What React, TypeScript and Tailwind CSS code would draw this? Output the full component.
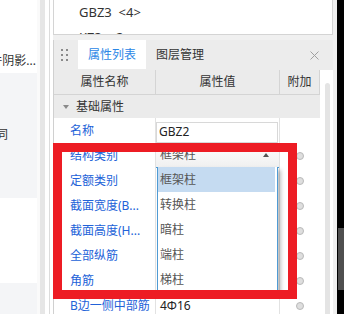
import React from "react";

const Circle = () => (
  <div className="w-[8px] h-[8px] rounded-full bg-[#dedede] border border-[#b9b9b9]" />
);

type Row = { label: string; value?: React.ReactNode; circle: boolean };

export default function App() {
  const rows: Row[] = [
    { label: "名称", circle: false },
    { label: "结构类别", circle: true },
    { label: "定额类别", circle: true },
    { label: "截面宽度(B...", circle: true },
    { label: "截面高度(H...", circle: true },
    { label: "全部纵筋", circle: true },
    { label: "角筋", circle: true },
    { label: "B边一侧中部筋", value: "4Φ16", circle: true },
  ];

  return (
    <div className="relative w-[344px] h-[314px] flex overflow-hidden bg-white text-[12px] text-[#333] font-['Noto_Sans','Noto_Sans_CJK_SC',sans-serif]">
      {/* left panel */}
      <div className="w-[37px] flex flex-col shrink-0">
        <div className="h-[73px] shrink-0 bg-white pt-[53px] flex justify-end overflow-hidden">
          <span className="whitespace-nowrap leading-4 pr-[1px]">构件阴影...</span>
        </div>
        <div className="h-[125px] shrink-0 bg-[#f4f5f7] pt-[54px] overflow-hidden">
          <span className="block leading-4 -ml-[4px]">同</span>
        </div>
        <div className="h-[85px] shrink-0 bg-white" />
        <div className="flex-1 bg-[#f4f5f7]" />
      </div>
      <div className="w-[3px] bg-[#fafafa] shrink-0" />
      <div className="w-[5px] bg-[#e6e6e6] shrink-0" />
      <div className="w-[4px] bg-white shrink-0" />
      <div className="w-[1px] bg-[#dcdcdc] shrink-0" />
      <div className="w-[3px] bg-white shrink-0" />

      {/* main */}
      <div className="w-[280px] shrink-0 flex flex-col h-[314px] overflow-hidden">
        {/* list panel */}
        <div className="h-[35px] shrink-0 border-l border-r border-b border-[#d4d4d4] bg-white overflow-hidden">
          <div className="h-[25px] flex items-center pl-[25px] text-[13px] leading-none whitespace-nowrap">
            GBZ3&nbsp;&nbsp;&lt;4&gt;
          </div>
          <div className="h-[25px] flex items-center pl-[25px] text-[13px] leading-none whitespace-nowrap">
            KZ3&nbsp;&nbsp;&lt;2&gt;
          </div>
        </div>
        <div className="h-[5px] shrink-0 bg-[#f0f0f0]" />

        {/* property panel */}
        <div className="flex-1 min-h-0 flex flex-col border-l border-[#d0d0d0] overflow-hidden">
          <div className="h-[30px] shrink-0 bg-[#ececec] flex items-stretch">
            <div className="w-[24px] flex items-center pl-[7px]">
              <div className="grid grid-cols-2 gap-x-[3px] gap-y-[3px]">
                {[0, 1, 2, 3, 4, 5].map((i) => (
                  <div key={i} className="w-[2px] h-[2px] bg-[#8a8a8a]" />
                ))}
              </div>
            </div>
            <div className="w-[68px] bg-white flex items-center justify-center text-[#2b87e6] mb-[1px]">
              属性列表
            </div>
            <div className="w-[68px] flex items-center pl-[10px]">图层管理</div>
            <div className="flex-1" />
            <div className="w-[24px] flex items-center justify-start pl-[1px]">
              <svg width="9" height="9" viewBox="0 0 9 9">
                <path d="M0.5 0.5L8.5 8.5M8.5 0.5L0.5 8.5" stroke="#a0a0a0" strokeWidth="1" />
              </svg>
            </div>
          </div>

          <div className="flex-1 min-h-0 flex overflow-hidden">
            {/* table */}
            <div className="w-[266px] flex flex-col">
              <div className="h-[25px] shrink-0 bg-[#ebebeb] border-b border-[#d4d4d4] flex">
                <div className="w-[102px] border-r border-[#d4d4d4] flex items-center justify-center">属性名称</div>
                <div className="w-[124px] border-r border-[#d4d4d4] flex items-center justify-center">属性值</div>
                <div className="w-[40px] border-r border-[#d4d4d4] flex items-center justify-center">附加</div>
              </div>
              <div className="h-[23px] shrink-0 bg-[#ebebeb] flex items-center">
                <svg width="6" height="4" viewBox="0 0 6 4" className="ml-[9px] mr-[7px]">
                  <path d="M0 0H6L3 4Z" fill="#8a8a8a" />
                </svg>
                <span>基础属性</span>
              </div>
              {rows.map((r, i) => (
                <div key={i} className="h-[25px] flex shrink-0">
                  <div className="w-[102px] border-r border-[#e2e2e2] flex items-center pl-[16px] text-[#2262d8] whitespace-nowrap overflow-hidden">
                    {r.label}
                  </div>
                  <div className="w-[124px] border-r border-[#e2e2e2] flex items-center">
                    {i === 0 && (
                      <div className="mt-[3px] w-[122px] h-[21px] border border-[#d8d8d8] flex items-center pl-[2px] text-[#222]">
                        GBZ2
                      </div>
                    )}
                    {i === 1 && (
                      <div className="w-full h-full flex items-center justify-between pl-[4px] pr-[10px] bg-gradient-to-b from-white to-[#f0f0f0] border-b border-[#4f9bd4] text-[#555]">
                        <span>框架柱</span>
                        <svg width="6" height="4" viewBox="0 0 6 4">
                          <path d="M0 4H6L3 0Z" fill="#555" />
                        </svg>
                      </div>
                    )}
                    {i > 1 && r.value && <span className="pl-[4px] text-[#222]">{r.value}</span>}
                  </div>
                  <div className="w-[40px] flex items-center justify-center">{r.circle && <Circle />}</div>
                </div>
              ))}
            </div>
            {/* gutter with scrollbar */}
            <div className="w-[13px] bg-white pt-[13px] pl-[5px]">
              <div className="w-[5px] h-full bg-[#e4e4e4] rounded-t-[3px]" />
            </div>
          </div>
        </div>
      </div>

      <div className="w-[4px] bg-[#f0f0f0] shrink-0" />
      <div className="w-[7px] bg-black shrink-0 pt-[228px] pl-[1px]">
        <div className="w-[6px] h-[62px] bg-[#4f4f4f]" />
      </div>

      {/* dropdown list */}
      <div className="absolute left-[157px] top-[167px] w-[121px] h-[125px] bg-white border-l border-r border-[#4f9bd4] shadow-[3px_3px_4px_rgba(0,0,0,0.25)] flex flex-col text-[#555]">
        {["框架柱", "转换柱", "暗柱", "端柱", "梯柱"].map((t, i) => (
          <div
            key={t}
            className={`h-[25px] flex items-center pl-[2px] ${i === 0 ? "bg-[#c5dbf1] mr-[2px]" : ""}`}
          >
            {t}
          </div>
        ))}
      </div>

      {/* red annotation frame */}
      <div className="absolute left-[53px] top-[143px] w-[244px] h-[156px] border-[9px] border-[#ed1c24]" />
    </div>
  );
}
